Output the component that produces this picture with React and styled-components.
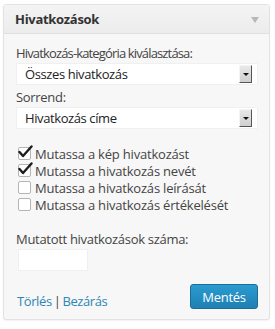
import React from 'react'
import styled, { createGlobalStyle } from 'styled-components'

const Global = createGlobalStyle`
  *, *::before, *::after { box-sizing: border-box; }
  body {
    margin: 0;
    background: #fff;
    font-family: "Open Sans", "DejaVu Sans", sans-serif;
  }
`

const options = [
  { label: 'Mutassa a kép hivatkozást', checked: true },
  { label: 'Mutassa a hivatkozás nevét', checked: true },
  { label: 'Mutassa a hivatkozás leírását', checked: false },
  { label: 'Mutassa a hivatkozás értékelését', checked: false },
]

export default function App() {
  return (
    <>
      <Global />
      <Page>
        <Widget>
          <Header>
            <Title>Hivatkozások</Title>
            <Toggle />
          </Header>
          <Body>
            <Field>
              <Label $tight>Hivatkozás-kategória kiválasztása:</Label>
              <Select>
                <span>Összes hivatkozás</span>
                <SelectButton />
              </Select>
            </Field>
            <Field>
              <Label>Sorrend:</Label>
              <Select>
                <span>Hivatkozás címe</span>
                <SelectButton />
              </Select>
            </Field>
            <Checks>
              {options.map((o) => (
                <CheckRow key={o.label}>
                  <Box>{o.checked && <Tick />}</Box>
                  {o.label}
                </CheckRow>
              ))}
            </Checks>
            <Field>
              <Label>Mutatott hivatkozások száma:</Label>
              <NumberInput />
            </Field>
            <Footer>
              <Links>
                <Link>Törlés</Link>
                <Sep>|</Sep>
                <Link>Bezárás</Link>
              </Links>
              <SaveButton>Mentés</SaveButton>
            </Footer>
          </Body>
        </Widget>
      </Page>
    </>
  )
}

function Tick() {
  return (
    <svg width="15" height="13" viewBox="0 0 15 13" style={{ position: 'absolute', left: -1, top: -3 }}>
      <path d="M1.5 7 L5 11 L13.5 1.5" fill="none" stroke="#1e1e1e" strokeWidth="2.4" strokeLinecap="round" strokeLinejoin="round" />
    </svg>
  )
}

const Page = styled.div`
  padding: 4px 5px 4px 3px;
`
const Widget = styled.div`
  width: 267px;
  border: 1px solid #e2e2e2;
  border-radius: 3px;
  background: #f7f7f7;
  box-shadow: 0 1px 2px rgba(0,0,0,0.06);
`
const Header = styled.div`
  height: 29px;
  display: flex;
  align-items: center;
  justify-content: space-between;
  padding: 0 10px 0 11px;
  background: linear-gradient(#f4f4f4, #ececec);
  border-bottom: 1px solid #e0e0e0;
`
const Title = styled.div`
  font-size: 13px;
  font-weight: 700;
  color: #333;
  letter-spacing: -0.3px;
`
const Toggle = styled.div`
  width: 0;
  height: 0;
  border-left: 4px solid transparent;
  border-right: 4px solid transparent;
  border-top: 6px solid #b8b8b8;
  margin-top: 2px;
`
const Body = styled.div`
  padding: 11px 11px 9px 12px;
`
const Field = styled.div`
  display: flex;
  flex-direction: column;
  gap: 2px;
  margin-bottom: 4px;
`
const Label = styled.div`
  font-size: 13px;
  color: #444;
  line-height: 16px;
  letter-spacing: ${(p) => (p.$tight ? '-0.85px' : '-0.3px')};
`
const Select = styled.div`
  height: 22px;
  display: flex;
  align-items: center;
  justify-content: space-between;
  padding: 0 5px 0 8px;
  background: #fff;
  border: 1px solid #f0f0f0;
  font-size: 13px;
  color: #222;
  letter-spacing: -0.4px;
`
const SelectButton = styled.div`
  width: 13px;
  height: 18px;
  position: relative;
  background: linear-gradient(#e8e8e8, #cfcfcf);
  border-right: 1px solid #555;
  border-bottom: 1px solid #555;
  border-top: 1px solid #f4f4f4;
  border-left: 1px solid #f4f4f4;
  &::after {
    content: '';
    position: absolute;
    left: 2.5px;
    top: 7px;
    border-left: 3px solid transparent;
    border-right: 3px solid transparent;
    border-top: 3px solid #111;
  }
`
const Checks = styled.div`
  margin-top: 16px;
  margin-bottom: 18px;
  display: flex;
  flex-direction: column;
`
const CheckRow = styled.label`
  display: flex;
  align-items: center;
  gap: 4px;
  height: 17px;
  font-size: 13px;
  color: #444;
  letter-spacing: -0.2px;
`
const Box = styled.span`
  position: relative;
  width: 13px;
  height: 13px;
  margin-left: 2px;
  border: 1px solid #b5b5b5;
  border-radius: 2px;
  background: #fff;
`
const NumberInput = styled.div`
  width: 70px;
  height: 22px;
  background: #fff;
  border: 1px solid #f0f0f0;
  margin-left: 2px;
`
const Footer = styled.div`
  margin-top: 12px;
  display: flex;
  align-items: center;
  justify-content: space-between;
`
const Links = styled.div`
  display: flex;
  align-items: center;
  gap: 2px;
  padding-left: 1px;
  padding-top: 9px;
  font-size: 13px;
  letter-spacing: -0.4px;
`
const Link = styled.span`
  color: #2e86b3;
`
const Sep = styled.span`
  color: #444;
`
const SaveButton = styled.button`
  width: 68px;
  height: 25px;
  border: 1px solid #1c6c95;
  border-radius: 3px;
  background: linear-gradient(#2a9bd0, #1f80b3);
  color: #fff;
  font-family: inherit;
  font-size: 13px;
  letter-spacing: -0.3px;
  padding: 0;
`
